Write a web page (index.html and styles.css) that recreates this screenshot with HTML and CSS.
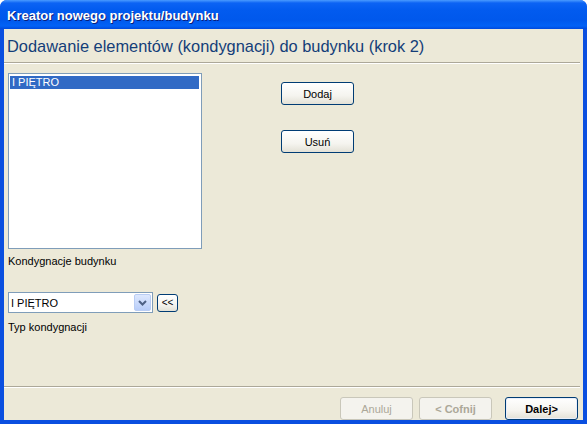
FILE: index.html
```html
<!DOCTYPE html>
<html lang="pl">
<head>
<meta charset="utf-8">
<title>Kreator nowego projektu/budynku</title>
<link rel="stylesheet" href="styles.css">
</head>
<body>
<div class="window">
  <div class="titlebar"><span class="title">Kreator nowego projektu/budynku</span></div>
  <div class="content">
    <h1 class="heading">Dodawanie elementów (kondygnacji) do budynku (krok 2)</h1>
    <div class="sep"></div>
    <div class="main">
      <div class="left">
        <div class="listbox">
          <div class="item selected">I PIĘTRO</div>
        </div>
        <div class="label">Kondygnacje budynku</div>
        <div class="combo-row">
          <div class="combo">
            <span class="combo-text">I PIĘTRO</span>
            <span class="combo-btn">
              <svg width="9" height="6" viewBox="0 0 9 6"><path d="M1 1 L4.5 4.5 L8 1" fill="none" stroke="#4D6185" stroke-width="2"/></svg>
            </span>
          </div>
          <button class="btn small">&lt;&lt;</button>
        </div>
        <div class="label label2">Typ kondygnacji</div>
      </div>
      <div class="right">
        <button class="btn">Dodaj</button>
        <button class="btn btn-usun">Usuń</button>
      </div>
    </div>
    <div class="sep sep-bottom"></div>
    <div class="footer">
      <button class="btn disabled">Anuluj</button>
      <button class="btn disabled bold">&lt; Cofnij</button>
      <button class="btn default bold">Dalej&gt;</button>
    </div>
  </div>
</div>
</body>
</html>
```
FILE: styles.css
```css
* { box-sizing: border-box; }
html, body { margin: 0; padding: 0; background: #ffffff; }
body { font-family: "Liberation Sans", Arial, sans-serif; font-size: 11px; color: #000; }

.window {
  width: 587px;
  height: 424px;
  display: flex;
  flex-direction: column;
  background: #0a4fe0;
  border-radius: 7px 7px 0 0;
  overflow: hidden;
}

.titlebar {
  height: 29px;
  flex: none;
  background: linear-gradient(#4a9bff 0px, #0c63f4 3px, #025bef 10px, #0058ec 20px, #0262f6 26px, #0049dc 29px);
  display: flex;
  align-items: center;
  padding-left: 7px;
}
.title {
  color: #ffffff;
  font-weight: bold;
  font-size: 13px;
  text-shadow: 1px 1px 0 #0a1e7a;
  margin-top: 1px;
}

.content {
  flex: 1;
  margin: 0 4px 4px 4px;
  background: #ece9d8;
  display: flex;
  flex-direction: column;
}

.heading {
  margin: 0;
  padding: 8px 0 0 3px;
  height: 33px;
  font-weight: normal;
  font-size: 16.4px;
  line-height: 19px;
  color: #143e78;
}

.sep {
  height: 2px;
  border-top: 1px solid #aca899;
  border-bottom: 1px solid #ffffff;
  margin-right: 3px;
  flex: none;
}

.main {
  display: flex;
  padding: 9px 0 0 4px;
  height: 322px;
  flex: none;
}

.left {
  width: 194px;
  display: flex;
  flex-direction: column;
}

.listbox {
  width: 194px;
  height: 176px;
  background: #ffffff;
  border: 1px solid #7f9db9;
  padding: 2px 2px 0 1px;
}
.item {
  height: 13px;
  line-height: 13px;
  padding-left: 2px;
  font-size: 11px;
}
.item.selected {
  background: #316ac5;
  color: #ffffff;
}

.label {
  margin-top: 6px;
  line-height: 13px;
  font-size: 11px;
}

.combo-row {
  display: flex;
  align-items: center;
  margin-top: 24px;
  gap: 4px;
}
.combo {
  width: 145px;
  height: 21px;
  background: #fff;
  border: 1px solid #7f9db9;
  display: flex;
  align-items: center;
  justify-content: space-between;
  padding: 0 1px 0 2px;
}
.combo-text { font-size: 11px; }
.combo-btn {
  width: 17px;
  height: 17px;
  border-radius: 2px;
  background: linear-gradient(#dde8fe, #b8cdf9);
  border: 1px solid #b9cdf4;
  display: flex;
  align-items: center;
  justify-content: center;
}

.label2 { margin-top: 8px; }

.right {
  display: flex;
  flex-direction: column;
  margin-left: 79px;
  padding-top: 9px;
}

.btn {
  font-family: "Liberation Sans", Arial, sans-serif;
  font-size: 11px;
  width: 73px;
  height: 23px;
  padding: 0;
  border: 1px solid #003c74;
  border-radius: 3px;
  background: linear-gradient(#ffffff 0%, #f5f4ef 60%, #e3e1d6 100%);
  color: #000;
  cursor: default;
}
.btn-usun { margin-top: 25px; }

.btn.small {
  width: 21px;
  height: 18px;
  font-size: 10px;
  line-height: 14px;
}

.footer {
  display: flex;
  justify-content: flex-end;
  gap: 6px;
  padding: 9px 5px 0 0;
}
.btn.disabled {
  color: #aca899;
  border-color: #c9c7ba;
  background: #f4f3ee;
}
.btn.bold { font-weight: bold; }
.btn.default {
  margin-left: 7px;
  border: 1px solid #003c74;
  box-shadow: inset 0 0 0 1px #e8eefb;
}
```
